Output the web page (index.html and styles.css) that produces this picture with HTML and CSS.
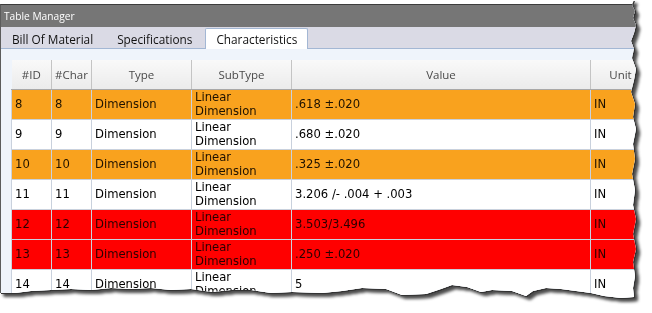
FILE: index.html
```html
<!DOCTYPE html>
<html>
<head>
    <title>Table Manager</title>
    <link rel="stylesheet" href="styles.css">
</head>
<body>
    <div class="shot">
        <div class="frame">
            <div class="window">
                <div class="titlebar">Table Manager</div>
                <div class="tabs">
                    <div class="tab">Bill Of Material</div>
                    <div class="tab">Specifications</div>
                    <div class="tab active">Characteristics</div>
                </div>
                <div class="content">
                    <table class="grid">
                        <colgroup>
                            <col class="c-id">
                            <col class="c-char">
                            <col class="c-type">
                            <col class="c-sub">
                            <col class="c-val">
                            <col class="c-unit">
                        </colgroup>
                        <thead>
                            <tr>
                                <th>#ID</th>
                                <th>#Char</th>
                                <th>Type</th>
                                <th>SubType</th>
                                <th>Value</th>
                                <th>Unit</th>
                            </tr>
                        </thead>
                        <tbody>
                            <tr class="warn">
                                <td>8</td><td>8</td><td>Dimension</td>
                                <td>Linear<br>Dimension</td><td>.618 ±.020</td><td>IN</td>
                            </tr>
                            <tr>
                                <td>9</td><td>9</td><td>Dimension</td>
                                <td>Linear<br>Dimension</td><td>.680 ±.020</td><td>IN</td>
                            </tr>
                            <tr class="warn">
                                <td>10</td><td>10</td><td>Dimension</td>
                                <td>Linear<br>Dimension</td><td>.325 ±.020</td><td>IN</td>
                            </tr>
                            <tr>
                                <td>11</td><td>11</td><td>Dimension</td>
                                <td>Linear<br>Dimension</td><td>3.206 /- .004 + .003</td><td>IN</td>
                            </tr>
                            <tr class="fail">
                                <td>12</td><td>12</td><td>Dimension</td>
                                <td>Linear<br>Dimension</td><td>3.503/3.496</td><td>IN</td>
                            </tr>
                            <tr class="fail">
                                <td>13</td><td>13</td><td>Dimension</td>
                                <td>Linear<br>Dimension</td><td>.250 ±.020</td><td>IN</td>
                            </tr>
                            <tr>
                                <td>14</td><td>14</td><td>Dimension</td>
                                <td>Linear<br>Dimension</td><td>5</td><td>IN</td>
                            </tr>
                        </tbody>
                    </table>
                </div>
            </div>
        </div>
    </div>
</body>
</html>
```

FILE: styles.css
```css
body {
    margin: 0;
    background: #fff;
    font-family: "Open Sans", "Noto Sans", sans-serif;
}
/* torn screenshot edge */
.shot {
    width: 652px;
    height: 313px;
    filter: drop-shadow(1px 1px 0 #333) drop-shadow(3px 3px 1.5px rgba(0, 0, 0, 0.7));
}
.frame {
    width: 652px;
    height: 313px;
    overflow: hidden;
    background: #fff;
    padding-top: 4px;
    box-sizing: border-box;
    clip-path: polygon(0 0, 634px 0, 632px 5px, 635px 11px, 633px 18px, 636px 25px, 634px 33px,
        631px 41px, 634px 49px, 632px 58px, 636px 69px, 634px 80px, 631px 92px, 635px 104px,
        633px 117px, 636px 129px, 633px 144px, 635px 159px, 632px 174px, 635px 190px,
        633px 205px, 636px 219px, 633px 234px, 636px 249px, 633px 262px, 635px 276px,
        633px 288px, 634px 297px, 621px 298px, 604px 296px, 591px 293px, 576px 291px,
        561px 289px, 546px 288px, 533px 291px, 526px 296px, 512px 291px, 492px 290px,
        481px 292px, 467px 287px, 452px 285px, 441px 289px, 426px 294px, 402px 295px,
        386px 289px, 362px 288px, 342px 291px, 322px 293px, 292px 292px, 271px 293px,
        251px 290px, 231px 290px, 212px 292px, 191px 289px, 171px 290px, 151px 288px,
        131px 289px, 111px 288px, 91px 290px, 71px 289px, 51px 290px, 31px 291px,
        15px 293px, 0 293px);
}
.window {
    border-top: 1px solid #3c3c3c;
    border-left: 1px solid #5c5c5c;
    height: 100%;
    background: #eff4fb;
}
.titlebar {
    height: 22px;
    line-height: 23px;
    padding-left: 3px;
    background: #767676;
    color: #fff;
    font-size: 10.2px;
}
.tabs {
    display: flex;
    align-items: flex-end;
    gap: 2px;
    height: 21px;
    background: #dadae5;
    border-bottom: 1px solid #a3b7d4;
}
.tab {
    padding: 0 11px;
    height: 20px;
    line-height: 22px;
    font-size: 11.8px;
    color: #111;
}
.tab.active {
    background: #fff;
    border: 1px solid #a3b7d4;
    border-bottom: none;
    border-radius: 2px 2px 0 0;
    padding: 0 10px;
    height: 20px;
    line-height: 20px;
    margin-bottom: -1px;
}
.content {
    padding: 11px 0 0 10px;
}
.grid {
    border-collapse: collapse;
    table-layout: fixed;
    width: 639px;
}
.c-id, .c-char { width: 40px; }
.c-type, .c-sub { width: 100px; }
.c-val { width: 299px; }
.c-unit { width: 60px; }
.grid th {
    height: 29px;
    padding: 0;
    font-weight: normal;
    font-size: 11.5px;
    color: #4a4a4a;
    background: linear-gradient(#f9f9f9, #ebebeb);
    border-right: 1px solid #c4c4c4;
    border-bottom: 1px solid #a8a8a8;
}
.grid td {
    height: 29px;
    padding: 0 3px;
    font-family: "DejaVu Sans", sans-serif;
    font-size: 11.6px;
    line-height: 13.5px;
    color: #000;
    background: #fff;
    border: 1px solid #c9d1dd;
    white-space: nowrap;
}
.grid tr.warn td {
    background: #f9a21e;
    color: #1e1200;
}
.grid tr.fail td {
    background: #ff0000;
    color: #2a0000;
}
```
